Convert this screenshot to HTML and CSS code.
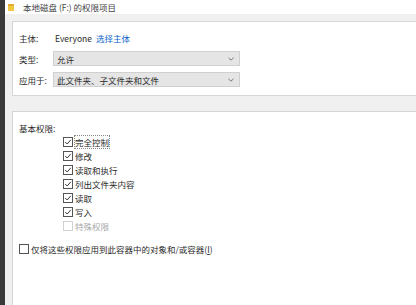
FILE: index.html
```html
<!DOCTYPE html>
<html lang="zh-CN">
<head>
<meta charset="utf-8">
<title>权限项目</title>
<link rel="stylesheet" href="styles.css">
</head>
<body>
<div class="app">
  <div class="strip"></div>
  <div class="main">
    <div class="titlebar">
      <svg class="folder" width="6" height="7" viewBox="0 0 6 7"><rect x="0" y="0" width="6" height="7" fill="#f2c744"/><rect x="0" y="0" width="6" height="2" fill="#e0ad2c"/></svg>
      <span class="title">本地磁盘 (F:) 的权限项目</span>
    </div>
    <div class="panel top">
      <div class="row">
        <span class="label">主体:</span>
        <span class="value">Everyone</span>
        <span class="link">选择主体</span>
      </div>
      <div class="row">
        <span class="label">类型:</span>
        <div class="select"><span>允许</span><svg class="chev" width="6" height="4" viewBox="0 0 6 4"><path d="M0.5 0.8 L3 3.2 L5.5 0.8" fill="none" stroke="#777" stroke-width="1"/></svg></div>
      </div>
      <div class="row">
        <span class="label">应用于:</span>
        <div class="select"><span>此文件夹、子文件夹和文件</span><svg class="chev" width="6" height="4" viewBox="0 0 6 4"><path d="M0.5 0.8 L3 3.2 L5.5 0.8" fill="none" stroke="#777" stroke-width="1"/></svg></div>
      </div>
    </div>
    <div class="panel bottom">
      <div class="heading">基本权限:</div>
      <ul class="perms">
        <li class="item"><span class="box checked"><svg width="8" height="8" viewBox="0 0 8 8"><path d="M1.2 4 L3.2 6 L6.8 1.8" fill="none" stroke="#3a3a3a" stroke-width="1"/></svg></span><span class="txt focus">完全控制</span></li>
        <li class="item"><span class="box checked"><svg width="8" height="8" viewBox="0 0 8 8"><path d="M1.2 4 L3.2 6 L6.8 1.8" fill="none" stroke="#3a3a3a" stroke-width="1"/></svg></span><span class="txt">修改</span></li>
        <li class="item"><span class="box checked"><svg width="8" height="8" viewBox="0 0 8 8"><path d="M1.2 4 L3.2 6 L6.8 1.8" fill="none" stroke="#3a3a3a" stroke-width="1"/></svg></span><span class="txt">读取和执行</span></li>
        <li class="item"><span class="box checked"><svg width="8" height="8" viewBox="0 0 8 8"><path d="M1.2 4 L3.2 6 L6.8 1.8" fill="none" stroke="#3a3a3a" stroke-width="1"/></svg></span><span class="txt">列出文件夹内容</span></li>
        <li class="item"><span class="box checked"><svg width="8" height="8" viewBox="0 0 8 8"><path d="M1.2 4 L3.2 6 L6.8 1.8" fill="none" stroke="#3a3a3a" stroke-width="1"/></svg></span><span class="txt">读取</span></li>
        <li class="item"><span class="box checked"><svg width="8" height="8" viewBox="0 0 8 8"><path d="M1.2 4 L3.2 6 L6.8 1.8" fill="none" stroke="#3a3a3a" stroke-width="1"/></svg></span><span class="txt">写入</span></li>
        <li class="item disabled"><span class="box"></span><span class="txt">特殊权限</span></li>
      </ul>
      <div class="item apply"><span class="box"></span><span class="txt">仅将这些权限应用到此容器中的对象和/或容器(<u>I</u>)</span></div>
    </div>
  </div>
</div>
</body>
</html>
```
FILE: styles.css
```css
* { box-sizing: border-box; }
html, body { margin: 0; padding: 0; }
body {
  width: 416px;
  height: 305px;
  overflow: hidden;
  font-family: "Noto Sans CJK SC", "Noto Sans", sans-serif;
  font-size: 8.5px;
  color: #2b2b2b;
  background: #f0f0f0;
}
.app { display: flex; height: 305px; }
.strip { width: 5px; background: #3a3a3a; flex: none; }
.main { flex: 1; display: flex; flex-direction: column; background: #f0f0f0; min-width: 0; }
.titlebar {
  height: 14px;
  background: #fff;
  display: flex;
  align-items: center;
  padding-left: 3px;
  gap: 9px;
  flex: none;
}
.folder { display: block; }
.title { color: #444; line-height: 14px; }
.panel {
  background: #fff;
  margin-left: 7px;
  border-left: 1px solid #d6d6d6;
  border-top: 1px solid #d6d6d6;
}
.panel.top {
  margin-top: 7px;
  border-bottom: 1px solid #d6d6d6;
  padding: 8px 0 8px 6px;
  display: flex;
  flex-direction: column;
  gap: 6px;
  height: 75px;
  flex: none;
}
.row { display: flex; align-items: center; height: 15px; }
.label { width: 34px; flex: none; }
.value { margin-left: 2px; width: 41px; }
.link { color: #0a63c9; }
.select {
  width: 187px;
  height: 15px;
  background: #e5e5e5;
  border: 1px solid #d0d0d0;
  display: flex;
  align-items: center;
  justify-content: space-between;
  padding: 0 5px 0 3px;
}
.chev { display: block; }
.panel.bottom {
  margin-top: 15px;
  flex: 1;
  padding: 9px 0 0 6px;
}
.heading { height: 14px; line-height: 14px; }
.perms { list-style: none; margin: 0; padding: 0 0 0 44px; }
.item { display: flex; align-items: center; height: 14px; gap: 2px; }
.box {
  width: 10px;
  height: 10px;
  border: 1px solid #555;
  background: #fff;
  display: flex;
  align-items: center;
  justify-content: center;
  flex: none;
}
.box svg { display: block; }
.txt { line-height: 12px; }
.focus { outline: 1px dotted #888; outline-offset: 0; }
.disabled .box { border-color: #d2d2d2; }
.disabled .txt { color: #a8a8a8; }
.apply { margin-top: 9px; }
.apply u { text-decoration: underline; }
```
